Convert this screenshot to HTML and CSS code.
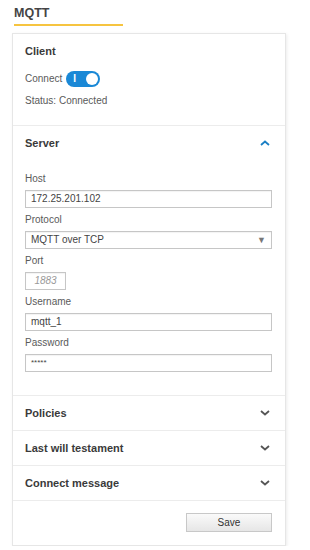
FILE: index.html
```html
<!DOCTYPE html>
<html lang="en">
<head>
    <meta charset="UTF-8">
    <meta name="viewport" content="width=device-width, initial-scale=1.0">
    <title>MQTT</title>
    <link rel="stylesheet" href="styles.css">
</head>
<body>
    <div class="page-title">MQTT</div>

    <div class="card">
        <div class="section client">
            <div class="section-title">Client</div>
            <div class="connect-row">
                <span>Connect</span>
                <span class="toggle"><span class="toggle-on">I</span><span class="knob"></span></span>
            </div>
            <div class="status">Status: Connected</div>
        </div>

        <div class="section">
            <div class="section-head">
                <span class="section-title">Server</span>
                <svg class="chevron up" width="10" height="6" viewBox="0 0 10 6"><path d="M1 5 L5 1.5 L9 5" fill="none" stroke="#1b7fc4" stroke-width="1.8"/></svg>
            </div>
            <div class="section-body">
                <div class="field">
                    <label>Host</label>
                    <div class="input">172.25.201.102</div>
                </div>
                <div class="field">
                    <label>Protocol</label>
                    <div class="input select">MQTT over TCP<span class="arrow">&#9660;</span></div>
                </div>
                <div class="field">
                    <label>Port</label>
                    <div class="input port">1883</div>
                </div>
                <div class="field">
                    <label>Username</label>
                    <div class="input">mqtt_1</div>
                </div>
                <div class="field">
                    <label>Password</label>
                    <div class="input pass">*****</div>
                </div>
            </div>
        </div>

        <div class="section-head collapsed">
            <span class="section-title">Policies</span>
            <svg class="chevron" width="10" height="6" viewBox="0 0 10 6"><path d="M1 1 L5 4.5 L9 1" fill="none" stroke="#555" stroke-width="1.8"/></svg>
        </div>
        <div class="section-head collapsed">
            <span class="section-title">Last will testament</span>
            <svg class="chevron" width="10" height="6" viewBox="0 0 10 6"><path d="M1 1 L5 4.5 L9 1" fill="none" stroke="#555" stroke-width="1.8"/></svg>
        </div>
        <div class="section-head collapsed">
            <span class="section-title">Connect message</span>
            <svg class="chevron" width="10" height="6" viewBox="0 0 10 6"><path d="M1 1 L5 4.5 L9 1" fill="none" stroke="#555" stroke-width="1.8"/></svg>
        </div>

        <div class="footer">
            <button class="save-btn">Save</button>
        </div>
    </div>
</body>
</html>
```

FILE: styles.css
```css
body {
    margin: 0;
    padding: 0 24px 0 12px;
    font-family: "Liberation Sans", Arial, sans-serif;
    font-size: 10px;
    color: #5a5a5a;
    background-color: white;
}
.page-title {
    margin: 6px 0 0 2px;
    width: 109px;
    padding-bottom: 4px;
    border-bottom: 2px solid #f6c440;
    font-size: 12.5px;
    font-weight: bold;
    color: #444;
    line-height: 14px;
}
.card {
    margin-top: 7px;
    border: 1px solid #e6e6e6;
    box-shadow: 1px 1px 3px rgba(0,0,0,0.08);
    background-color: white;
}
.section {
    border-bottom: 1px solid #ececec;
}
.client {
    padding: 10px 13px 17px 12px;
}
.section-title {
    font-size: 11px;
    font-weight: bold;
    color: #3a3a3a;
    line-height: 14px;
}
.connect-row {
    display: flex;
    align-items: center;
    gap: 4px;
    margin-top: 13px;
    line-height: 16px;
}
.toggle {
    display: flex;
    align-items: center;
    justify-content: space-between;
    width: 34px;
    height: 16px;
    padding: 0 2px 0 7px;
    box-sizing: border-box;
    border-radius: 8px;
    background-color: #1a88d6;
}
.toggle-on {
    color: white;
    font-size: 10px;
    font-weight: bold;
}
.knob {
    width: 12px;
    height: 12px;
    border-radius: 50%;
    background-color: white;
}
.status {
    margin-top: 7px;
    line-height: 14px;
}
.section-head {
    display: flex;
    justify-content: space-between;
    align-items: center;
    height: 34px;
    padding: 0 15px 0 12px;
}
.collapsed {
    border-bottom: 1px solid #ececec;
}
.chevron {
    display: block;
}
.section-body {
    padding: 12px 13px 18px 12px;
}
.field label {
    display: block;
    line-height: 14px;
    margin-bottom: 4px;
}
.field {
    margin-bottom: 5px;
}
.input {
    height: 18px;
    box-sizing: border-box;
    border: 1px solid #c6c6c6;
    box-shadow: inset 0 1px 1px rgba(0,0,0,0.05);
    padding: 0 5px;
    line-height: 16px;
    color: #444;
}
.select {
    display: flex;
    justify-content: space-between;
}
.arrow {
    font-size: 9px;
    color: #777;
}
.port {
    width: 41px;
    text-align: center;
    font-style: italic;
    color: #999;
}
.pass {
    font-size: 8px;
}
.footer {
    display: flex;
    justify-content: flex-end;
    padding: 12px 13px 13px 12px;
}
.save-btn {
    width: 86px;
    height: 19px;
    border: 1px solid #c8c8c8;
    background: linear-gradient(#fafafa, #e6e6e6);
    font-family: "Liberation Sans", Arial, sans-serif;
    font-size: 10px;
    color: #333;
    padding: 0;
}
```
